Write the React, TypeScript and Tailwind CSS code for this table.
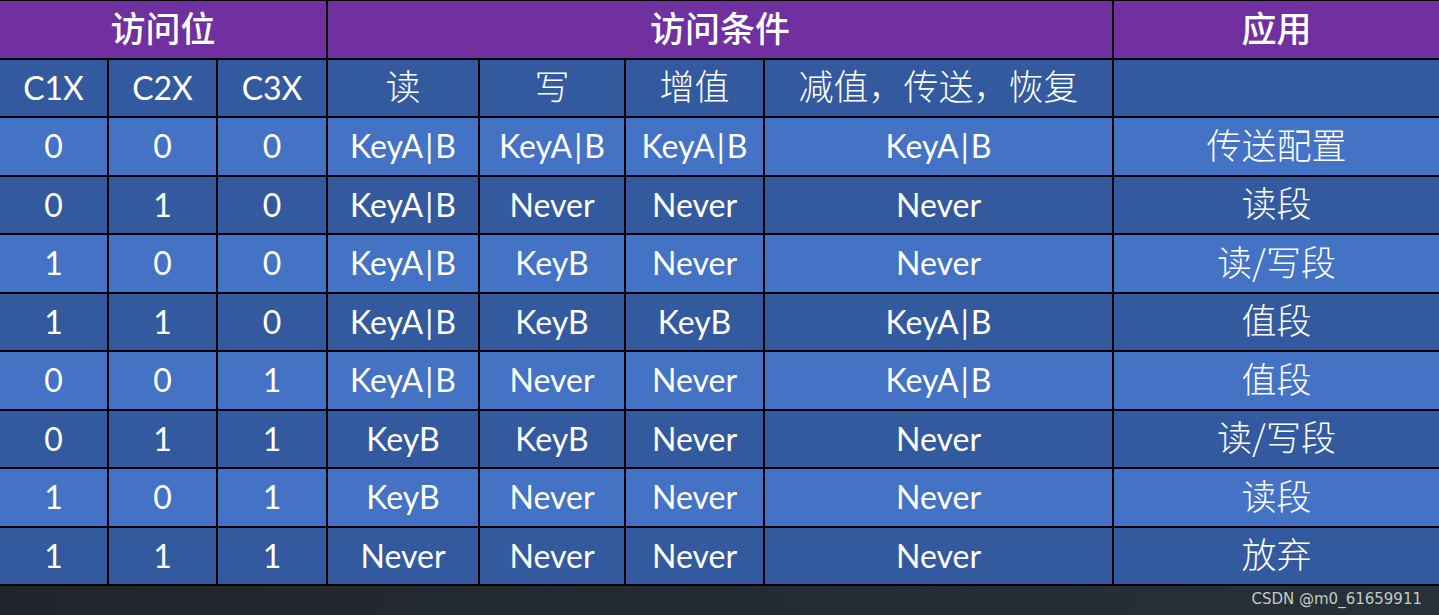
const rows: [string, string, string, string, string, string, string, string][] = [
  ['0', '0', '0', 'KeyA|B', 'KeyA|B', 'KeyA|B', 'KeyA|B', '传送配置'],
  ['0', '1', '0', 'KeyA|B', 'Never', 'Never', 'Never', '读段'],
  ['1', '0', '0', 'KeyA|B', 'KeyB', 'Never', 'Never', '读/写段'],
  ['1', '1', '0', 'KeyA|B', 'KeyB', 'KeyB', 'KeyA|B', '值段'],
  ['0', '0', '1', 'KeyA|B', 'Never', 'Never', 'KeyA|B', '值段'],
  ['0', '1', '1', 'KeyB', 'KeyB', 'Never', 'Never', '读/写段'],
  ['1', '0', '1', 'KeyB', 'Never', 'Never', 'Never', '读段'],
  ['1', '1', '1', 'Never', 'Never', 'Never', 'Never', '放弃'],
];

const subHeads = ['C1X', 'C2X', 'C3X', '读', '写', '增值', '减值，传送，恢复', ''];

const cell = 'flex items-center justify-center text-white';
const latin = "font-['Lato','Noto_Sans_CJK_SC',sans-serif] text-[32px]";
const cjk = "font-['Noto_Sans_CJK_SC',sans-serif] text-[35px] font-light pb-[5px]";
const head = "font-['Noto_Sans_CJK_SC',sans-serif] text-[35px] font-medium pb-[5px] bg-[#7030a0]";

// Calibri's pipe carries wide side bearings; pad it with hair spaces
const fmt = (v: string) => v.replace('|', '\u200A|\u200A');

export default function App() {
  return (
    <div className="w-[1439px] h-[615px] flex flex-col bg-[#21252b]">
      {/* access table */}
      <div className="grid grid-cols-[107px_107px_108px_150px_144px_137px_347px_1fr] grid-rows-[repeat(10,56.5px)] gap-[2px] bg-black pt-[1px] pb-[2px]">
        <div className={`${cell} ${head} col-span-3`}>访问位</div>
        <div className={`${cell} ${head} col-span-4`}>访问条件</div>
        <div className={`${cell} ${head}`}>应用</div>

        {subHeads.map((h, i) => (
          <div key={i} className={`${cell} ${i < 3 ? latin : cjk} bg-[#335a9e]`}>
            {h}
          </div>
        ))}

        {rows.map((r, ri) =>
          r.map((v, ci) => (
            <div
              key={`${ri}-${ci}`}
              className={`${cell} ${ci === 7 ? cjk : latin} ${ri % 2 === 0 ? 'bg-[#4472c4]' : 'bg-[#335a9e]'}`}
            >
              {fmt(v)}
            </div>
          ))
        )}
      </div>

      <div className="flex-1 flex items-center justify-end pr-[17px] pb-[2px] bg-gradient-to-r from-[#21252b] to-[#263139]">
        <span className="font-['DejaVu_Sans',sans-serif] text-[15px] text-[#c8c8c8]">CSDN @m0_61659911</span>
      </div>
    </div>
  );
}
